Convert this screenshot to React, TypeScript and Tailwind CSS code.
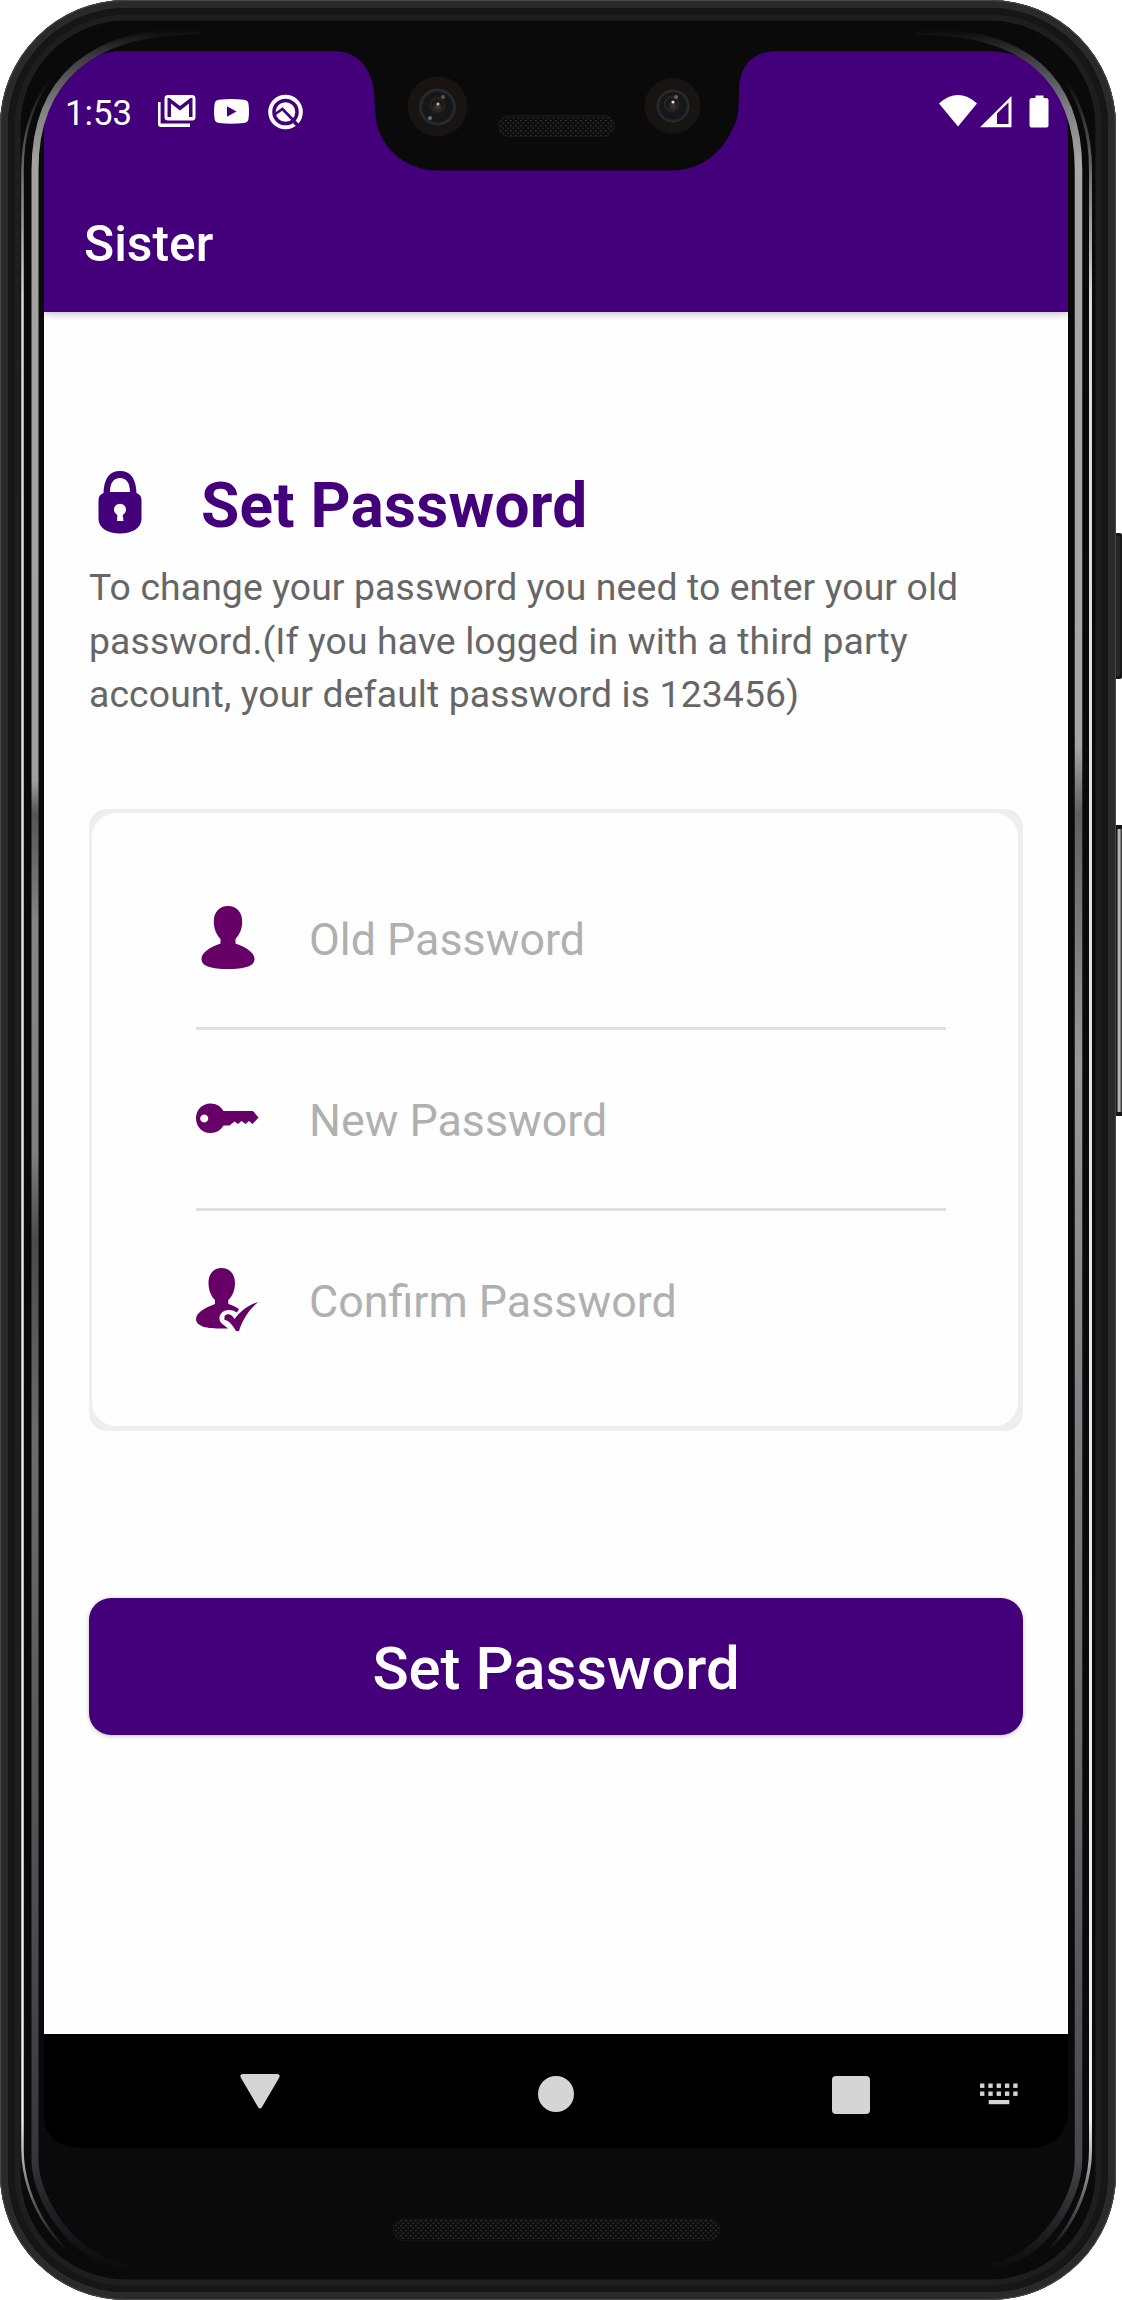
import React from "react";

function DeviceFrame() {
  return (
    <svg
      className="pointer-events-none absolute inset-0"
      width="1122"
      height="2300"
      viewBox="0 0 1122 2300"
      fill="none"
    >
      <defs>
        <linearGradient id="glintLeft" gradientUnits="userSpaceOnUse" x1="0" y1="30" x2="0" y2="2270">
          <stop offset="0" stopColor="#0a0a0a" />
          <stop offset="0.012" stopColor="#3c3c40" />
          <stop offset="0.035" stopColor="#808083" />
          <stop offset="0.06" stopColor="#a3a3a3" />
          <stop offset="0.335" stopColor="#a0a0a0" />
          <stop offset="0.35" stopColor="#555" />
          <stop offset="0.4" stopColor="#858585" />
          <stop offset="0.5" stopColor="#808080" />
          <stop offset="0.54" stopColor="#4a4a4a" />
          <stop offset="0.63" stopColor="#6c6c6e" />
          <stop offset="0.85" stopColor="#4c4c50" />
          <stop offset="0.95" stopColor="#35353a" />
          <stop offset="1" stopColor="#0a0a0a" />
        </linearGradient>
        <linearGradient id="glintRight" gradientUnits="userSpaceOnUse" x1="0" y1="30" x2="0" y2="2270">
          <stop offset="0" stopColor="#0a0a0a" />
          <stop offset="0.012" stopColor="#3c3c40" />
          <stop offset="0.035" stopColor="#808083" />
          <stop offset="0.06" stopColor="#a8a8a8" />
          <stop offset="0.32" stopColor="#a5a5a5" />
          <stop offset="0.35" stopColor="#606060" />
          <stop offset="0.46" stopColor="#999" />
          <stop offset="0.8" stopColor="#66666a" />
          <stop offset="0.95" stopColor="#48484c" />
          <stop offset="1" stopColor="#0a0a0a" />
        </linearGradient>
        <linearGradient id="rim" gradientUnits="userSpaceOnUse" x1="0" y1="80" x2="0" y2="2250">
          <stop offset="0" stopColor="#0a0a0a" />
          <stop offset="0.05" stopColor="#808080" />
          <stop offset="0.1" stopColor="#dcdcdc" />
          <stop offset="0.94" stopColor="#f0f0f0" />
          <stop offset="0.98" stopColor="#555" />
          <stop offset="1" stopColor="#0a0a0a" />
        </linearGradient>
        <linearGradient id="key" x1="0" y1="0" x2="1" y2="0">
          <stop offset="0" stopColor="#111" />
          <stop offset="0.4" stopColor="#161616" />
          <stop offset="0.66" stopColor="#d8d8d8" />
          <stop offset="1" stopColor="#222" />
        </linearGradient>
        <pattern id="mesh" width="5" height="5" patternUnits="userSpaceOnUse">
          <rect width="5" height="5" fill="#0d0d0d" />
          <rect x="0" y="0" width="1.6" height="1.3" fill="#343434" />
          <rect x="2.5" y="2.5" width="1.6" height="1.3" fill="#303030" />
        </pattern>
        <radialGradient id="lens">
          <stop offset="0" stopColor="#4a3a34" />
          <stop offset="0.3" stopColor="#1a1818" />
          <stop offset="0.75" stopColor="#151618" />
          <stop offset="0.92" stopColor="#2c2f32" />
          <stop offset="1" stopColor="#141210" />
        </radialGradient>
      </defs>

      {/* side buttons */}
      <rect x="1112" y="527" width="10" height="116" transform="translate(0 6) scale(1 1)" fill="none" />
      <rect x="1112" y="533" width="10" height="146" rx="2" fill="#181818" />
      <rect x="1115" y="536" width="5" height="140" rx="2" fill="#262626" />
      <rect x="1113" y="825" width="9" height="291" fill="#151515" />
      <rect x="1113" y="829" width="9" height="283" fill="url(#key)" />

      {/* chassis, drawn as closed rings around the screen opening */}
      <path
        fillRule="evenodd"
        fill="#0a0a0a"
        d="M126 0H990A126 126 0 0 1 1116 126V2174A126 126 0 0 1 990 2300H126A126 126 0 0 1 0 2174V126A126 126 0 0 1 126 0ZM44 130V2120Q48 2148 84 2148H1034Q1064 2144 1068 2116V130C1066 82 1035 51 985 51H778C752 51 739 66 739 92C738.500 110 739 117 733 128C722 154 700 170.500 670 170.500H438C404 170.500 376 146 375 110C374 96 375 88 370 76C364 60 352 51 332 51H125C80 51 46 80 44 130Z"
      />
      <rect x="4" y="4" width="1108" height="2292" rx="122" stroke="#2a2a2a" strokeWidth="8" />
      <rect x="0.500" y="0.500" width="1115" height="2299" rx="125.500" stroke="#484848" strokeWidth="1" />
      <rect x="11.500" y="11.500" width="1093" height="2277" rx="115" stroke="#161616" strokeWidth="7" />
      <rect x="17.500" y="17.500" width="1081" height="2265" rx="109" stroke="#1e1e1e" strokeWidth="6" />

      {/* light reflections on the glass edge */}
      <path d="M112 33C66 48 22.500 96 22.500 170V2150C22.500 2200 58 2262 112 2274" stroke="url(#rim)" strokeWidth="2.500" />
      <path d="M200 31C90 30 35 80 35 170V2160C35 2200 75 2262 128 2267" stroke="url(#glintLeft)" strokeWidth="7" />
      <path d="M1004 33C1050 48 1090.500 96 1090.500 170V2150C1090.500 2200 1058 2262 1004 2274" stroke="url(#rim)" strokeWidth="3" />
      <path d="M916 31C1026 30 1078.500 80 1078.500 170V2160C1078.500 2200 1040 2262 988 2267" stroke="url(#glintRight)" strokeWidth="7.500" />

      {/* front cameras */}
      <circle cx="437.500" cy="106.500" r="30" fill="#171411" />
      <circle cx="437.500" cy="107" r="19" fill="url(#lens)" />
      <circle cx="437.500" cy="105" r="7" stroke="#2b2522" strokeWidth="1.500" />
      <circle cx="438" cy="104" r="1.500" fill="#d0b0a4" />
      <circle cx="443" cy="97" r="2" fill="#5a5552" />
      <circle cx="430" cy="118" r="2" fill="#6a7074" />
      <circle cx="672.500" cy="106" r="28" fill="#171411" />
      <circle cx="673" cy="106" r="17" fill="url(#lens)" />
      <circle cx="671.500" cy="104" r="7" stroke="#2a2a2a" strokeWidth="1.500" />
      <circle cx="673" cy="102" r="1.600" fill="#e0e0e0" />
      <circle cx="676" cy="97" r="2" fill="#66666a" />

      {/* speakers */}
      <rect x="498.500" y="115.500" width="116" height="21" rx="10.500" fill="url(#mesh)" stroke="#181818" />
      <rect x="393" y="2219" width="327" height="21.500" rx="10.700" fill="url(#mesh)" stroke="#151515" />
    </svg>
  );
}

function GmailIcon() {
  return (
    <svg width="38" height="33" viewBox="0 0 38 33" fill="#fff">
      <path d="M0 7H2.600V28.500H32V32H3Q0 32 0 29Z" />
      <path
        fillRule="evenodd"
        d="M10 0H34Q37.500 0 37.500 3.500V22Q37.500 25.500 34 25.500H10Q6.500 25.500 6.500 22V3.500Q6.500 0 10 0ZM9.500 3V22H13V8.500L22 15.500L31 8.500V22H34.500V3H32.500L22 11L11.500 3Z"
      />
    </svg>
  );
}

function YoutubeIcon() {
  return (
    <svg width="35" height="25" viewBox="0 0 35 25" fill="#fff">
      <path
        fillRule="evenodd"
        d="M5 .8Q17.500-.8 30 .8Q34 1.200 34.500 5Q35.500 12.500 34.500 20Q34 23.500 30 24Q17.500 25.300 5 24Q1 23.500.6 20Q-.6 12.500.6 5Q1 1.200 5 .8ZM13 7.200V17.800L22.500 12.500Z"
      />
    </svg>
  );
}

function SearchRingIcon() {
  return (
    <svg width="36" height="36" viewBox="0 0 36 36" fill="none">
      <circle cx="17.500" cy="18" r="15.300" stroke="#fff" strokeWidth="4" />
      <circle cx="17.500" cy="18" r="9.800" fill="#fff" />
      <path d="M6.500 20.500L14.500 15L30 31" stroke="#43007a" strokeWidth="2.600" />
      <path d="M26 28.500L31 33" stroke="#43007a" strokeWidth="2.600" />
    </svg>
  );
}

function SignalIcons() {
  return (
    <svg width="110" height="33" viewBox="0 0 110 33" fill="#fff">
      <path d="M0 8.500Q19-8.300 38 8.500L19 31.500Z" />
      <path fillRule="evenodd" d="M41 32.300L72.500 1V32.300ZM58 18.500V29H69.500V7.500Z" />
      <path d="M96.500 0.500H104.500V3H107Q109.500 3 109.500 5V30.500Q109.500 32.500 107.500 32.500H92.500Q90.500 32.500 90.500 30.500V5Q90.500 3 93 3H96.500Z" />
    </svg>
  );
}

function LockIcon() {
  return (
    <svg width="44" height="63" viewBox="0 0 44 63" fill="#43007a">
      <path
        fillRule="evenodd"
        d="M5.500 22C6 8 11 0 22 0S38 8 38.500 22Q43.500 24 43.500 29V48C43.500 57 34 62.500 22 62.500S.5 57 .5 48V29Q.5 24 5.500 22ZM12 21H32C32 12 28.500 7 22 7S12 12 12 21ZM19 50H25.500L24.700 44A6 6 0 1 0 19.300 44Z"
      />
    </svg>
  );
}

function PersonIcon() {
  return (
    <svg width="54" height="64" viewBox="0 0 54 64" fill="#660066">
      <path d="M27 0C35.500 0 41.200 6 41.200 15.500C41.200 23 38.500 28.500 34.500 33V37.500C45 41 53.500 46.500 53.500 53C53.500 60.500 43 63 27 63S.5 60.500.5 53C.5 46.500 9 41 19.500 37.500V33C15.500 28.500 12.800 23 12.800 15.500C12.800 6 18.500 0 27 0Z" />
    </svg>
  );
}

function KeyIcon() {
  return (
    <svg width="63" height="31" viewBox="0 0 63 31" fill="#660066">
      <path
        fillRule="evenodd"
        d="M14.500 0.500C20.500 0.500 25 3.500 27.500 8H57L62.500 14.500L56.500 21L53 18L49.500 21L45.500 18L42 21L38.500 18.500L33.500 22.500H27.500C25 27 20.500 30 14.500 30C6 30 0 23.500 0 15.200S6 .5 14.500 .5ZM8.200 11.500A4 4 0 1 0 8.210 11.500Z"
      />
    </svg>
  );
}

function PersonCheckIcon() {
  return (
    <svg width="63" height="64" viewBox="0 0 63 64" fill="#660066">
      <path d="M25.500 0C33.500 0 39 6 39 15C39 22 36.500 28 32.300 32V36C36.500 37.300 40 39 43 41L41 44.500C33 39 23.500 43 23.500 50C23 55 28 56.500 32 60.500C14 61 0 59.500 0 51C0 45 9 39.500 19 36V32C15 28 12.500 22 12.500 15C12.500 6 17.500 0 25.500 0Z" />
      <path d="M28.500 48C31.500 44.500 36 46.500 38.500 51C44 43.500 52 37 62.500 34C53 41 46.500 52 43 63H40C36.500 57 33 52.500 28.500 52Z" />
    </svg>
  );
}

const fields = [
  { label: "Old Password", icon: <PersonIcon /> },
  { label: "New Password", icon: <KeyIcon /> },
  { label: "Confirm Password", icon: <PersonCheckIcon /> },
];

function KeyboardIcon() {
  return (
    <svg width="38" height="22" viewBox="0 0 38 22" fill="#d5d5d5">
      {[0, 8.3, 16.6, 24.9, 33.2].map((x) => (
        <g key={x}>
          <rect x={x} y="0.500" width="4.400" height="4.400" />
          <rect x={x} y="8.500" width="4.400" height="4.400" />
        </g>
      ))}
      <rect x="8.700" y="17" width="20.600" height="4.200" />
    </svg>
  );
}

export default function App() {
  return (
    <div className="relative h-[2300px] w-[1122px] overflow-hidden bg-white pl-[44px] pt-[51px] font-['Roboto',sans-serif]">
      <div className="flex h-[2097px] w-[1024px] flex-col bg-[#fefefe]">
        <header className="relative h-[260.500px] shrink-0 bg-[#43007a] text-white shadow-[0_1px_8px_rgba(0,0,0,0.3)]">
          <div className="flex h-[124px] items-center pl-[21px] pr-[19px]">
            <span className="w-[93px] text-[34.8px] leading-none">1:53</span>
            <div className="flex items-center pb-[3px]">
              <GmailIcon />
              <span className="ml-[18px]"><YoutubeIcon /></span>
              <span className="ml-[19px]"><SearchRingIcon /></span>
            </div>
            <div className="ml-auto pb-[3px]">
              <SignalIcons />
            </div>
          </div>
          <h1 className="flex h-[136px] items-center pl-[40px] pt-[4px] text-[49.8px] font-medium leading-none">Sister</h1>
        </header>

        <main className="flex grow flex-col pl-[45px] pr-[45px] pt-[162.500px]">
          <div className="flex h-[64px] items-center">
            <span className="ml-[9px] w-[102px] pb-[7px]"><LockIcon /></span>
            <h2 className="ml-px whitespace-nowrap text-[62.2px] font-bold leading-none tracking-[0.28px] text-[#43007a]">Set Password</h2>
          </div>
          <p className="mt-[23px] h-[160px] whitespace-nowrap text-[37.35px] leading-[53.5px] tracking-[0.12px] text-[#666]">
            To change your password you need to enter your old<br />
            password.(If you have logged in with a third party<br />
            account, your default password is 123456)
          </p>

          <section className="mt-[88px] h-[622px] rounded-[18px] bg-[#eee] pb-[5px] pl-[3px] pr-[5px] pt-[4px]">
            <div className="h-full rounded-[24px] bg-[#fefefe] pl-[104px] pr-[72px] pt-[36.500px]">
              {fields.map((f, i) => (
                <div
                  key={f.label}
                  className={
                    i < 2
                      ? "flex h-[180.500px] items-center border-b-[3px] border-[#e0e0e0] pt-[2px]"
                      : "flex h-[180.500px] items-center"
                  }
                >
                  <span className="flex w-[63px] justify-center pb-[2px]">{f.icon}</span>
                  <span className="ml-[50px] whitespace-nowrap pt-[3px] text-[44.8px] leading-none text-[#b0b0b0]">{f.label}</span>
                </div>
              ))}
            </div>
          </section>

          <button className="mt-[167px] flex h-[137px] items-center justify-center rounded-[22px] bg-[#43007a] pt-[7px] text-[59.8px] font-medium leading-none text-white shadow-[0_1px_4px_rgba(0,0,0,0.25)]">
            Set Password
          </button>
        </main>

        <nav className="flex h-[114px] shrink-0 items-start bg-black pl-[196px] pt-[39px]">
          <svg width="40" height="37" viewBox="0 0 40 37" fill="#d5d5d5">
            <path d="M3 1H37Q41 1 39 5L22 34Q20 37 18 34L1 5Q-1 1 3 1Z" />
          </svg>
          <div className="ml-[258px] mt-[3px] size-[36px] rounded-full bg-[#d5d5d5]" />
          <div className="ml-[258px] mt-[2.500px] size-[38px] rounded-[4px] bg-[#d5d5d5]" />
          <span className="ml-[110px] mt-[10px]"><KeyboardIcon /></span>
        </nav>
      </div>
      <DeviceFrame />
    </div>
  );
}
